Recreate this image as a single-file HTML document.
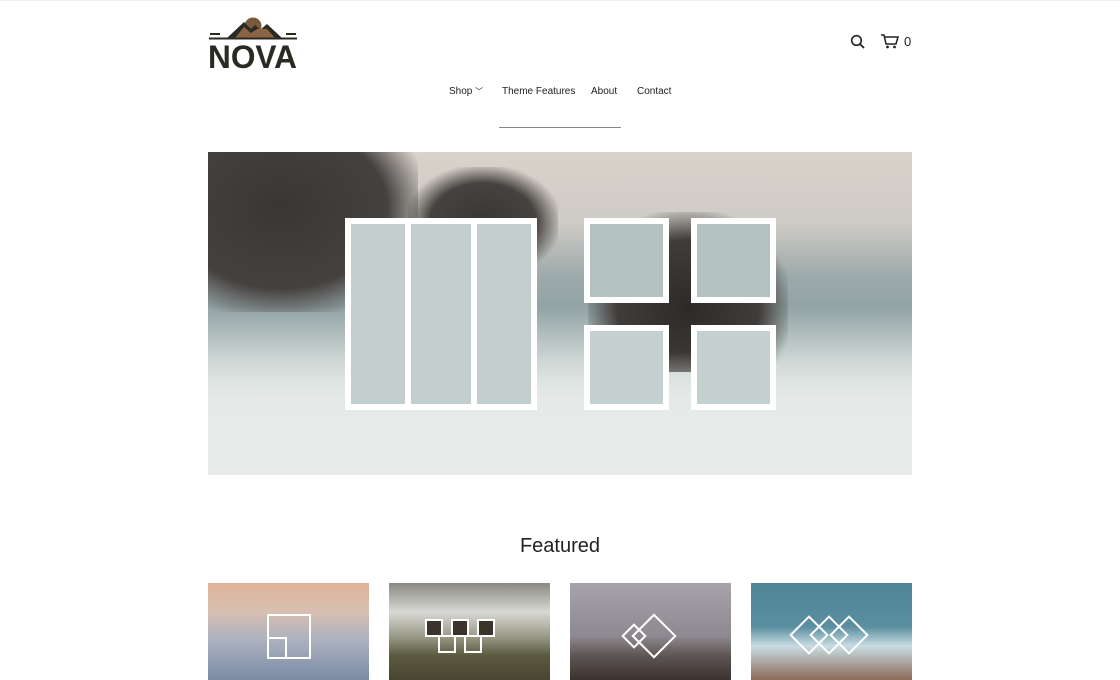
<!DOCTYPE html>
<html><head><style>
*{margin:0;padding:0;box-sizing:border-box}
body{width:1120px;height:680px;overflow:hidden;background:#fff;font-family:"Liberation Sans",sans-serif;color:#222;position:relative}
.abs{position:absolute}
.nav{top:86px;font-size:10px;color:#222}
.hero{left:208px;top:152px;width:704px;height:323px;overflow:hidden;
background:linear-gradient(180deg,#d8d2ca 0%,#cfcbc5 22%,#9eaaab 38%,#93a3a5 48%,#c4cfcd 62%,#e2e7e5 78%,#e6eae8 100%)}
.fr{position:absolute;border:6px solid #fff}
.th{position:absolute;top:583px;width:161px;height:97px}
</style></head><body>
<div style="position:absolute;left:0;top:0;width:1120px;height:1px;background:#eee"></div>
<svg class="abs" style="left:207px;top:12px" width="92" height="60" viewBox="0 0 92 60">
<circle cx="46" cy="14" r="8.5" fill="#7a5a3e"/>
<path d="M20 26 L37 10 L44 17 L48 13 L53 18 L60 12 L75 26 Z" fill="#2a2a22"/>
<path d="M28 26 L37 15 L44 21 L50 17 L60 17 L68 26 Z" fill="#8a6444"/>
<rect x="3" y="21" width="10" height="2" fill="#2a2a22"/><rect x="79" y="21" width="10" height="2" fill="#2a2a22"/>
<rect x="2" y="25.5" width="88" height="2" fill="#2a2a22"/>
<text x="1" y="56" font-family="Liberation Sans" font-weight="bold" font-size="32" fill="#2a2a22" textLength="89" lengthAdjust="spacingAndGlyphs">NOVA</text>
</svg>
<svg class="abs" style="left:850px;top:34px" width="16" height="16" viewBox="0 0 16 16"><circle cx="6.5" cy="6.5" r="4.8" fill="none" stroke="#222" stroke-width="1.6"/><path d="M10 10 L14 14" stroke="#222" stroke-width="1.8"/></svg>
<svg class="abs" style="left:880px;top:33px" width="20" height="16" viewBox="0 0 20 16"><path d="M1 2 H4 L6 11 H16 L18 4 H5" fill="none" stroke="#222" stroke-width="1.5"/><circle cx="7.5" cy="14" r="1.4" fill="#222"/><circle cx="14.5" cy="14" r="1.4" fill="#222"/></svg>
<div class="abs" style="left:904px;top:34px;font-size:13px">0</div>
<div class="abs nav" style="left:449px">Shop <span style="font-size:8px">﹀</span></div>
<div class="abs nav" style="left:502px">Theme Features</div>
<div class="abs nav" style="left:591px">About</div>
<div class="abs nav" style="left:637px">Contact</div>
<div class="abs" style="left:499px;top:127px;width:122px;height:1px;background:#888"></div>
<div class="abs hero">
<div class="abs" style="left:-40px;top:-30px;width:250px;height:190px;background:radial-gradient(ellipse at 45% 45%,#3a3634 0%,#45413f 55%,rgba(70,66,64,0) 78%)"></div>
<div class="abs" style="left:200px;top:15px;width:150px;height:110px;background:radial-gradient(ellipse at 50% 50%,#3a3634 0%,#46423f 50%,rgba(80,80,80,0) 75%)"></div>
<div class="abs" style="left:380px;top:60px;width:200px;height:160px;background:radial-gradient(ellipse at 50% 60%,#2e2a28 0%,#403c3a 50%,rgba(80,80,80,0) 75%)"></div>
<div class="abs" style="left:0;top:200px;width:704px;height:123px;background:linear-gradient(180deg,rgba(230,235,233,0) 0%,rgba(230,235,233,.8) 40%,#e6eae8 100%)"></div>
<div class="fr" style="left:137px;top:66px;width:192px;height:192px;background:#c3cfce"></div>
<div class="abs" style="left:197px;top:70px;width:6px;height:186px;background:#fff"></div>
<div class="abs" style="left:263px;top:70px;width:6px;height:186px;background:#fff"></div>
<div class="fr" style="left:376px;top:66px;width:85px;height:85px;background:#b4c2c2"></div>
<div class="fr" style="left:483px;top:66px;width:85px;height:85px;background:#b4c2c2"></div>
<div class="fr" style="left:376px;top:173px;width:85px;height:85px;background:#c5d1d0"></div>
<div class="fr" style="left:483px;top:173px;width:85px;height:85px;background:#c5d1d0"></div>
</div>
<div class="abs" style="left:0;width:1120px;top:535px;text-align:center;font-size:20px;color:#222">Featured</div>
<div class="th" style="left:208px;background:linear-gradient(180deg,#e0b49a 0%,#d7bfb1 30%,#aab0bf 60%,#7b8aa3 100%)"><div class="abs" style="left:59px;top:31px;width:44px;height:45px;border:2px solid #fff"></div><div class="abs" style="left:59px;top:54px;width:20px;height:22px;border:2px solid #fff;border-bottom:none;border-left:none"></div></div>
<div class="th" style="left:389px;background:linear-gradient(180deg,#8a8a82 0%,#d8d8d4 30%,#9a9a88 55%,#5a5a40 75%,#4a4432 100%)">
<div class="abs" style="left:36px;top:36px;width:18px;height:18px;border:2px solid #fff;background:#3a342c"></div>
<div class="abs" style="left:62px;top:36px;width:18px;height:18px;border:2px solid #fff;background:#3a342c"></div>
<div class="abs" style="left:88px;top:36px;width:18px;height:18px;border:2px solid #fff;background:#3a342c"></div>
<div class="abs" style="left:49px;top:52px;width:18px;height:18px;border:2px solid #fff"></div>
<div class="abs" style="left:75px;top:52px;width:18px;height:18px;border:2px solid #fff"></div></div>
<div class="th" style="left:570px;background:linear-gradient(180deg,#a8a2aa 0%,#8e8890 55%,#5e5654 75%,#3c3230 100%)"><div class="abs" style="left:55px;top:44px;width:18px;height:18px;border:2px solid #fff;transform:rotate(45deg)"></div><div class="abs" style="left:68px;top:37px;width:32px;height:32px;border:2px solid #fff;transform:rotate(45deg)"></div></div>
<div class="th" style="left:751px;background:linear-gradient(180deg,#4e8596 0%,#5a8ea0 45%,#c8dce2 65%,#8c6a5a 100%)"><div class="abs" style="left:44px;top:38px;width:28px;height:28px;border:2px solid #fff;transform:rotate(45deg)"></div><div class="abs" style="left:64px;top:38px;width:28px;height:28px;border:2px solid #fff;transform:rotate(45deg)"></div><div class="abs" style="left:84px;top:38px;width:28px;height:28px;border:2px solid #fff;transform:rotate(45deg)"></div></div>
</body></html>
